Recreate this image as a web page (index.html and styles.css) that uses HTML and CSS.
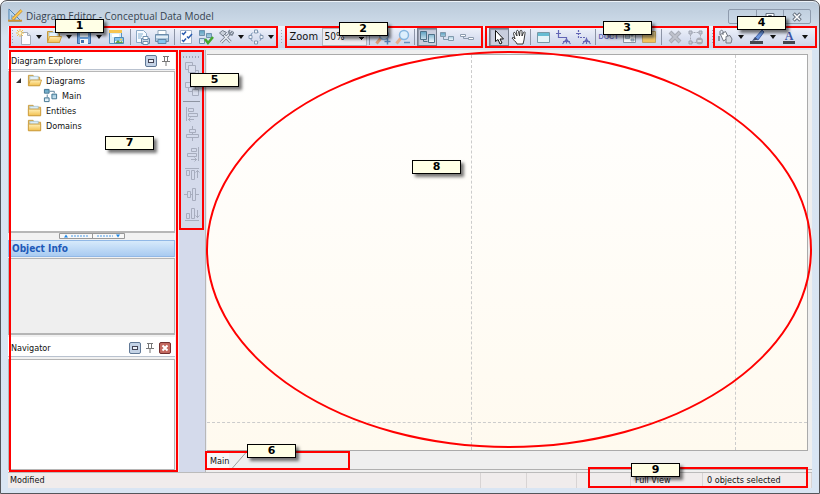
FILE: index.html
```html
<!DOCTYPE html>
<html lang="en">
<head>
<meta charset="utf-8">
<title>Diagram Editor - Conceptual Data Model</title>
<link rel="stylesheet" href="styles.css">
</head>
<body>
<svg class="sprite" aria-hidden="true">
  <linearGradient id="gold" x2="0" y2="1"><stop stop-color="#fff0b8"/><stop offset="1" stop-color="#f2c04f"/></linearGradient>
  <linearGradient id="sky" x2="0" y2="1"><stop stop-color="#5b9fc0"/><stop offset="1" stop-color="#f4fbff"/></linearGradient>
  <symbol id="folder" viewBox="0 0 16 16"><path d="M1.5 13.500v-11h5l1 2h7v9z" fill="#f6d27b" stroke="#c79a3d"/><path d="M3 3.500h9v3H3z" fill="#d8edfb" stroke="#8db5cf" stroke-width=".6"/><path d="M1.500 6.500h13v7h-13z" fill="url(#gold)" stroke="#cfa144"/></symbol>
  <symbol id="folder-open" viewBox="0 0 16 16"><path d="M1.500 13.500v-11h5l1 2h6v9z" fill="#f6d27b" stroke="#c79a3d"/><path d="M3 3.500h9v4H3z" fill="#e3f2fc" stroke="#8db5cf" stroke-width=".6"/><path d="M3.500 7.500h12l-2 6h-12z" fill="url(#gold)" stroke="#cfa144"/></symbol>
  <symbol id="new" viewBox="0 0 16 16"><path d="M5.500 3.500h6l3 3v9h-9z" fill="#fdfdff" stroke="#a4acb8"/><path d="M11.500 3.500v3h3" fill="#dfe6ee" stroke="#a4acb8"/><path d="M4 0v8M0 4h8M1 1l6 6M7 1L1 7" stroke="#efc04c"/><circle cx="4" cy="4" r="1.500" fill="#fff6cf"/></symbol>
  <symbol id="save" viewBox="0 0 16 16"><path d="M1.500 1.500h13v13h-13z" fill="#6a9ed6" stroke="#3a6ca8"/><path d="M4 2h8v6H4z" fill="#e9f3fb"/><path d="M4 10h8v5H4z" fill="#f4f7fa"/><path d="M5 11h3v3H5z" fill="#3f71ad"/></symbol>
  <symbol id="save-image" viewBox="0 0 16 16"><path d="M1.500 1.500h12v13h-12z" fill="#d9ecf8" stroke="#5793c2"/><path d="M1 1h13v3H1z" fill="#f6c451"/><path d="M4 5h7v3H4z" fill="#fff"/><path d="M6.500 8.500h9v6h-9z" fill="#fff" stroke="#4e8ab5"/><path d="M7 9h8v3H7z" fill="#82c3ed"/><path d="M7 14l3-3 2 2 2-1 1 2z" fill="#5c9e48"/><circle cx="13" cy="10.500" r="1" fill="#ffd24b"/></symbol>
  <symbol id="preview" viewBox="0 0 16 16"><path d="M2.500 1.500h7l3 3v9h-10z" fill="#f7fbff" stroke="#8ba9c6"/><path d="M4 5h5M4 7h4M4 9h3" stroke="#82aed0"/><path d="M7.500 9.500h8v5h-8z" fill="#c7d6e5" stroke="#6687a7"/><path d="M9 7.500h5v3H9zM9 12.500h5v3H9z" fill="#fff" stroke="#7091af"/></symbol>
  <symbol id="print" viewBox="0 0 16 16"><path d="M4 1.500h8v5H4z" fill="#fff" stroke="#8fa5b9"/><path d="M1.500 5.500h13v7h-13z" fill="#aac3d9" stroke="#6c8cab"/><path d="M2 7h12v2H2z" fill="#e2edf6"/><path d="M4 10.500h8v4H4z" fill="#83c6ef" stroke="#6086a8"/></symbol>
  <symbol id="checks" viewBox="0 0 16 16"><path d="M2.500 1.500h11v13h-11z" fill="#fff" stroke="#9fb1c8"/><path d="M4 4l1.500 1.500L8 2.500M4 11l1.500 1.500L8 9.500M9 7.500l1.500 1.500L14 5" fill="none" stroke="#285aaf" stroke-width="1.500"/></symbol>
  <symbol id="verify" viewBox="0 0 16 16"><path d="M1.500 1.500h5v5h-5zM8.500 4.500h5v4h-5zM1.500 9.500h5v5h-5z" fill="url(#sky)" stroke="#6e91ad"/><path d="M7 10l3 4 5-6" fill="none" stroke="#43a62f" stroke-width="2.500"/></symbol>
  <symbol id="tools" viewBox="0 0 16 16"><path d="M3 13.500L11.500 5M5 5l7.500 8" stroke="#747d8b" stroke-width="3"/><path d="M3 13.500L11.500 5M5 5l7.500 8" stroke="#e9edf4" stroke-width="1.500"/><path d="M1.500 4l3-2.500 4 2-3.500 3.500z" fill="#c9d0da" stroke="#747d8b"/><path d="M14.500 2L12 4.500 10.500 3 12 1M11 5l3 1 2-3" fill="none" stroke="#7d8796" stroke-width="1.500"/></symbol>
  <symbol id="cycle" viewBox="0 0 16 16"><circle cx="8" cy="8" r="5.500" fill="none" stroke="#6c89ad" stroke-dasharray="4 2"/><path d="M6.500 1h3v3h-3zM12 6.500h3v3h-3zM6.500 12h3v3h-3zM1 6.500h3v3H1z" fill="#f4f8fc" stroke="#8398b2"/></symbol>
  <symbol id="zoom-in" viewBox="0 0 16 16"><path d="M1.500 14.500L6 9" stroke="#d99b76" stroke-width="3"/><circle cx="9" cy="6" r="4.500" fill="#dceffd" stroke="#7fa9d2" stroke-width="1.500"/><path d="M9.500 12.500h6M12.500 9.500v6" stroke="#557fb2" stroke-width="1.500"/></symbol>
  <symbol id="zoom-out" viewBox="0 0 16 16"><path d="M1.500 14.500L6 9" stroke="#e5ae8b" stroke-width="3"/><circle cx="9" cy="6" r="4.500" fill="#dceffd" stroke="#86b6df" stroke-width="1.500"/><path d="M9 13.500h6" stroke="#668fbd" stroke-width="1.500"/></symbol>
  <symbol id="view-large" viewBox="0 0 16 16"><path d="M1.500 2.500h6v8h-6zM9.500 5.500h6v8h-6z" fill="url(#sky)" stroke="#4e7188"/><path d="M4.500 11v1.500h4" fill="none" stroke="#4e7188"/></symbol>
  <symbol id="view-mid" viewBox="0 0 16 16"><path d="M1.500 3.500h5v4h-5zM9.500 7.500h5v4h-5z" fill="url(#sky)" stroke="#8199ac"/><path d="M4.500 8v2.500H9" fill="none" stroke="#8199ac"/></symbol>
  <symbol id="view-small" viewBox="0 0 16 16"><path d="M1.500 5.500h5v2h-5zM9.500 8.500h5v2h-5z" fill="#fff" stroke="#8d9caf"/><path d="M4.500 8v1.500H9" fill="none" stroke="#8d9caf"/></symbol>
  <symbol id="pointer" viewBox="0 0 16 16"><path d="M4.500 1.500v11l2.500-2 2 4.500 2-1-2-4h3.500z" fill="#fff" stroke="#111"/></symbol>
  <symbol id="hand" viewBox="0 0 16 16"><path d="M6 15c-1-3-4-4-5-6 1-1 2-.5 3 1L2.500 4.500c0-1.500 1.500-1.500 2 0L6 7 5.500 2.500c0-1.500 1.700-1.500 2 0L8.500 7 9 2c.5-1 2-1 2 .5L11 7l1.500-3.500c.8-1.200 2-.5 1.500 1L13 11l-1 4z" fill="#fff" stroke="#252525" stroke-width=".9"/></symbol>
  <symbol id="entity" viewBox="0 0 16 16"><path d="M2.500 3.500h12v10h-12z" fill="#e5f4f8" stroke="#7898a6"/><path d="M3 4h11v3H3z" fill="#66bdd3"/></symbol>
  <symbol id="relation" viewBox="0 0 16 16"><path d="M1 4.500h5M3.500 1v7.500h8v6M11.500 10l-4 5M11.500 10l4 5M8 12.500h7" fill="none" stroke="#6265b5" stroke-width="1.200"/></symbol>
  <symbol id="relation-dash" viewBox="0 0 16 16"><path d="M1 4.500h5M3.500 1v7.500h8" fill="none" stroke="#6265b5" stroke-width="1.200" stroke-dasharray="2 1"/><path d="M11.500 9v6M11.500 10l-4 5M11.500 10l4 5M8 12.500h7" fill="none" stroke="#6265b5" stroke-width="1.200"/></symbol>
  <symbol id="picture" viewBox="0 0 16 16"><path d="M2.500 2.500h12v11h-12z" fill="#f7fafc" stroke="#8795a4"/><path d="M4.500 5.500h4v4h-4zM10 10h3v2h-3zM10 5h2v2h-2z" fill="#b4c6d7" stroke="#768ca1" stroke-width=".7"/></symbol>
  <symbol id="note" viewBox="0 0 16 16"><path d="M1.500 2.500h13v11h-13z" fill="url(#gold)" stroke="#c3a664"/></symbol>
  <symbol id="delete" viewBox="0 0 16 16"><path d="M3 3l10 10M13 3L3 13" stroke="#a6aab5" stroke-width="4"/><path d="M3.500 3.500l9 9M12.500 3.500l-9 9" stroke="#bfc2cc" stroke-width="2"/></symbol>
  <symbol id="unselect" viewBox="0 0 16 16"><path d="M3.500 3.500h10v10h-10z" fill="none" stroke="#a4a8b5" stroke-dasharray="2 1"/><path d="M2 2h3v3H2zM12 2h3v3h-3zM2 12h3v3H2z" fill="#c6cad5" stroke="#9da2b0"/><circle cx="12.500" cy="12" r="3.500" fill="#a9acb7"/><path d="M10.500 12h4" stroke="#fff" stroke-width="1.200"/></symbol>
  <symbol id="fill" viewBox="0 0 16 16"><path d="M3.500 5.500l5-3 3 6-5 3.500z" fill="#fff" stroke="#6e747e"/><path d="M3 6V2.500c1-2 3-1 3 0V6" fill="none" stroke="#6e747e"/><path d="M9 7.500l4-1 2 3.500-1 4H9z" fill="#d7dbe2" stroke="#757b86"/><path d="M2 7v5" stroke="#8b929e" stroke-width="2"/></symbol>
  <symbol id="pen" viewBox="0 0 16 16"><path d="M1 12h13v3H1z" fill="#42464e"/><path d="M13 1l2 2-6 8-3-2z" fill="#6d98df" stroke="#294b9a" stroke-width=".8"/><path d="M6 8l3 2.500L3 12z" fill="#3c4d72"/></symbol>
  <symbol id="font-bar" viewBox="0 0 16 16"><path d="M2 12h12v3H2z" fill="#42464e"/></symbol>
  <symbol id="diagram" viewBox="0 0 16 16"><path d="M1.500 1.500h5v4h-5zM9.500 6.500h5v5h-5zM1.500 10.500h5v4h-5z" fill="url(#sky)" stroke="#3e718e"/><path d="M7 3.500h5v2M4.500 7v3" fill="none" stroke="#567c96"/></symbol>
  <symbol id="app" viewBox="0 0 16 16"><path d="M1 1l13 13H1z" fill="#b9d5ee" stroke="#477eae"/><path d="M4 8l4 4H4z" fill="#fff" stroke="#477eae" stroke-width=".7"/><path d="M14.500 2.500L5 12" stroke="#b57727" stroke-width="3"/><path d="M14.500 2.500L5 12" stroke="#ffd053" stroke-width="1.800"/><path d="M0 13.500h15" stroke="#cf9430" stroke-width="2"/></symbol>
  <symbol id="pin" viewBox="0 0 10 12"><path d="M2 1.500h6M3.500 1.500v5M6.500 1.500v5M1 6.500h8M5 7v4" fill="none" stroke="#777"/></symbol>
  <symbol id="front" viewBox="0 0 16 16"><path d="M1.500 1.500h7v7h-7zM8.500 9.500h6v5h-6z"/><path d="M4.500 4.500h7v7h-7z" fill="#d9deed"/></symbol>
  <symbol id="back" viewBox="0 0 16 16"><path d="M4.500 3.500h7v7h-7z"/><path d="M1.500 1.500h6v5h-6zM8.500 8.500h6v6h-6z" fill="#d9deed"/></symbol>
  <symbol id="align-left" viewBox="0 0 16 16"><path d="M2.500 1v14M4.500 2.500h5v3h-5zM4.500 7.500h9v3h-9zM4 13.500h6M6.500 11.500l-2 2 2 2"/></symbol>
  <symbol id="align-center" viewBox="0 0 16 16"><path d="M8.500 0v3M8.500 6v2M8.500 12v3M5.500 3.500h6v3h-6zM2.500 8.500h12v3h-12z"/></symbol>
  <symbol id="align-right" viewBox="0 0 16 16"><path d="M14.500 1v14M7.500 2.500h5v3h-5zM3.500 7.500h9v3h-9zM7 13.500h6M10.500 11.500l2 2-2 2"/></symbol>
  <symbol id="align-top" viewBox="0 0 16 16"><path d="M1 2.500h14M2.500 4.500h3v5h-3zM7.500 4.500h3v9h-3zM13.500 4v8M11.500 6.500l2-2 2 2"/></symbol>
  <symbol id="align-middle" viewBox="0 0 16 16"><path d="M0 8.500h3M6 8.500h2M12 8.500h3M3.500 5.500h3v6h-3zM8.500 2.500h3v12h-3z"/></symbol>
  <symbol id="align-bottom" viewBox="0 0 16 16"><path d="M1 14.500h14M2.500 7.500h3v5h-3zM7.500 2.500h3v10h-3zM13.500 4v8M11.500 9.500l2 2 2-2"/></symbol>
</svg>

<main class="window">
  <header class="titlebar">
    <svg class="icon"><use href="#app"/></svg>
    <h1>Diagram Editor - Conceptual Data Model</h1>
    <div class="window-buttons">
      <button aria-label="Minimize"><svg viewBox="0 0 14 10"><path d="M3 5.500h8v2H3z" fill="#fff" stroke="#66717f"/></svg></button>
      <button aria-label="Maximize"><svg viewBox="0 0 14 10"><path d="M3 1.500h8v7H3zM5.500 3.500h3v3h-3z" fill="#fff" stroke="#66717f"/></svg></button>
      <button aria-label="Close"><svg viewBox="0 0 14 10"><path d="M3.500 1.500l7 7M10.500 1.500l-7 7" stroke="#66717f" stroke-width="3.500"/><path d="M4 2l6 6M10 2L4 8" stroke="#fff" stroke-width="1.500"/></svg></button>
    </div>
  </header>

  <nav class="toolbar" aria-label="Tools">
    <div class="group standard">
      <i class="grip"></i>
      <button aria-label="New"><svg class="icon"><use href="#new"/></svg></button><button class="drop" aria-label="New options"></button>
      <button aria-label="Open"><svg class="icon"><use href="#folder-open"/></svg></button><button class="drop" aria-label="Open options"></button>
      <button aria-label="Save"><svg class="icon"><use href="#save"/></svg></button><button class="drop" aria-label="Save options"></button>
      <button class="wide" aria-label="Save as image"><svg class="icon"><use href="#save-image"/></svg></button>
      <i class="sep narrow"></i>
      <button aria-label="Print preview"><svg class="icon"><use href="#preview"/></svg></button>
      <button aria-label="Print"><svg class="icon"><use href="#print"/></svg></button>
      <i class="sep narrow"></i>
      <button aria-label="Options"><svg class="icon"><use href="#checks"/></svg></button>
      <button aria-label="Verify"><svg class="icon"><use href="#verify"/></svg></button>
      <button aria-label="Tools"><svg class="icon"><use href="#tools"/></svg></button><button class="drop" aria-label="Tool options"></button>
      <button aria-label="Layout"><svg class="icon"><use href="#cycle"/></svg></button><button class="drop" aria-label="Layout options"></button>
      <b class="callout">1</b>
    </div>
    <i class="grip between"></i>
    <div class="group zoom">
      <label for="zoom">Zoom</label>
      <select id="zoom"><option>50%</option><option>100%</option></select>
      <i class="sep"></i>
      <button aria-label="Zoom in"><svg class="icon"><use href="#zoom-in"/></svg></button>
      <button aria-label="Zoom out"><svg class="icon"><use href="#zoom-out"/></svg></button>
      <i class="sep narrow"></i>
      <button class="pressed" aria-label="Full view"><svg class="icon"><use href="#view-large"/></svg></button>
      <button aria-label="Medium view"><svg class="icon"><use href="#view-mid"/></svg></button>
      <button aria-label="Small view"><svg class="icon"><use href="#view-small"/></svg></button>
      <b class="callout">2</b>
    </div>
    <div class="group draw">
      <button class="pressed" aria-label="Pointer"><svg class="icon"><use href="#pointer"/></svg></button>
      <button aria-label="Hand"><svg class="icon"><use href="#hand"/></svg></button>
      <i class="sep narrow"></i>
      <button aria-label="Entity"><svg class="icon"><use href="#entity"/></svg></button>
      <button aria-label="Identifying relationship"><svg class="icon"><use href="#relation"/></svg></button>
      <button aria-label="Relationship"><svg class="icon"><use href="#relation-dash"/></svg></button>
      <i class="sep"></i>
      <button class="doct">DOCT</button>
      <button aria-label="Picture"><svg class="icon"><use href="#picture"/></svg></button>
      <button aria-label="Note"><svg class="icon"><use href="#note"/></svg></button>
      <i class="sep"></i>
      <button aria-label="Delete"><svg class="icon"><use href="#delete"/></svg></button>
      <button aria-label="Remove from diagram"><svg class="icon"><use href="#unselect"/></svg></button>
      <b class="callout">3</b>
    </div>
    <i class="grip between"></i>
    <div class="group colors">
      <button aria-label="Fill color"><svg class="icon"><use href="#fill"/></svg></button><button class="drop" aria-label="Fill options"></button>
      <button aria-label="Line color"><svg class="icon"><use href="#pen"/></svg></button><button class="drop" aria-label="Line options"></button>
      <button class="font-color"><svg class="icon"><use href="#font-bar"/></svg><span>A</span></button><button class="drop" aria-label="Font options"></button>
      <b class="callout">4</b>
    </div>
  </nav>

  <div class="workspace">
    <aside class="sidebar">
      <header class="panel-head"><h2>Diagram Explorer</h2><button class="restore" aria-label="Restore"></button><button aria-label="Pin"><svg class="pin"><use href="#pin"/></svg></button></header>
      <ul class="tree">
        <li><i class="expander"></i><svg class="icon"><use href="#folder-open"/></svg>Diagrams</li>
        <li class="child"><svg class="icon"><use href="#diagram"/></svg>Main</li>
        <li><i></i><svg class="icon"><use href="#folder"/></svg>Entities</li>
        <li><i></i><svg class="icon"><use href="#folder"/></svg>Domains</li>
      </ul>
      <div class="splitter"><svg viewBox="0 0 66 6"><path d="M.5.500h65v5H.5zM33.500 0v6" fill="#f8f8f8" stroke="#999"/><path d="M5 4.500h4l-2-3zM57 1.500h4l-2 3z" fill="#1b86e8"/><path d="M12 3h17M38 3h16" stroke="#4a9be8" stroke-dasharray="2 1"/></svg></div>
      <h2 class="info-head">Object Info</h2>
      <div class="info-body"></div>
      <header class="panel-head navigator"><h2>Navigator</h2><button class="restore" aria-label="Restore"></button><button aria-label="Pin"><svg class="pin"><use href="#pin"/></svg></button><button class="close" aria-label="Close"><svg viewBox="0 0 10 10"><path d="M2.500 2.500l5 5M7.500 2.500l-5 5" stroke="#fff" stroke-width="2"/></svg></button></header>
      <div class="navigator-body"></div>
      <b class="callout">7</b>
    </aside>

    <div class="align-column">
      <div class="align-bar">
        <i class="dots"></i>
        <button aria-label="Bring to front"><svg class="icon"><use href="#front"/></svg></button>
        <button aria-label="Send to back"><svg class="icon"><use href="#back"/></svg></button>
        <i class="rule"></i>
        <button aria-label="Align left"><svg class="icon"><use href="#align-left"/></svg></button>
        <button aria-label="Align center"><svg class="icon"><use href="#align-center"/></svg></button>
        <button aria-label="Align right"><svg class="icon"><use href="#align-right"/></svg></button>
        <button aria-label="Align top"><svg class="icon"><use href="#align-top"/></svg></button>
        <button aria-label="Align middle"><svg class="icon"><use href="#align-middle"/></svg></button>
        <button aria-label="Align bottom"><svg class="icon"><use href="#align-bottom"/></svg></button>
        <b class="callout">5</b>
      </div>
    </div>

    <section class="editor">
      <div class="canvas">
        <i class="page-line first"></i><i class="page-line second"></i><i class="page-line bottom"></i>
      </div>
      <div class="tabs">
        <div class="tab-area">
          <button class="tab">Main</button><svg class="slant" viewBox="0 0 14 16"><path d="M0 16L14 0" stroke="#999"/></svg>
          <b class="callout">6</b>
        </div>
      </div>
      <i class="ellipse"></i>
      <b class="callout">8</b>
    </section>
  </div>

  <footer class="status">
    <span class="state">Modified</span><span class="cell"></span><span class="cell"></span><span class="cell"></span><span class="view">Full View</span><span class="selected">0 objects selected</span>
    <div class="status-mark"><b class="callout">9</b></div>
  </footer>
</main>
</body>
</html>
```
FILE: styles.css
```css
* { box-sizing: border-box; }

body {
  margin: 0;
  background: #fff;
  color: #111;
  font: 9px/14px "DejaVu Sans Condensed", "DejaVu Sans", sans-serif;
}

h1, h2, ul { margin: 0; padding: 0; font-size: inherit; font-weight: normal; }
button { margin: 0; padding: 0; border: 0; background: none; color: inherit; font: inherit; }
i { font-style: normal; }
.sprite { position: absolute; width: 0; height: 0; }
.icon { display: block; flex: none; width: 16px; height: 16px; }

.window {
  display: flex;
  flex-direction: column;
  min-height: 100vh;
  padding: 0 7px 5px;
  border: 1px solid #55565b;
  border-radius: 7px 7px 0 0;
  background: linear-gradient(#b9c9d9, #d8e4f1 36px, #d9e5f3);
  box-shadow: inset 0 1px #edf3f9;
}

.titlebar { display: flex; align-items: center; height: 25px; }
.titlebar h1 { flex: 1; padding: 4px 0 0 3px; color: #364350; font: 10px/14px "Open Sans", sans-serif; }
.titlebar .icon { margin-top: 4px; width: 15px; height: 15px; }
.window-buttons { display: flex; align-self: flex-start; margin: 8px 1px 0 0; border: 1px solid #8e9bad; border-radius: 2px; }
.window-buttons button { width: 27px; height: 13px; }
.window-buttons button + button { border-left: 1px solid #8e9bad; }
.window-buttons svg { display: block; width: 14px; height: 10px; margin: auto; }

.toolbar {
  display: flex;
  height: 22px;
  margin-right: -5px;
  padding-left: 1px;
  background: linear-gradient(#f1f4fb, #dce2f2 50%, #cbd3e8);
}
.group { position: relative; display: flex; align-items: center; border: 2px solid #f00; }
.group button { display: flex; flex: none; align-items: center; justify-content: center; width: 20px; height: 18px; }
.group .drop { width: 10px; }
.group .wide { width: 24px; }
.drop::after { content: ""; border: 3px solid transparent; border-top: 4px solid #111; border-bottom: 0; }
.group .pressed { border: 1px solid #767d8c; background: #c9cede; box-shadow: inset 1px 1px 1px #8d94a4; }
.grip { width: 3px; height: 16px; background: radial-gradient(circle, #9da5b6 1px, transparent 1px) 0 0 / 3px 3px; }
.grip.between { margin: 3px 0 0 2px; }
.sep { width: 6px; height: 16px; background: linear-gradient(#8c94a6, #8c94a6) center / 1px 100% no-repeat; }
.sep.narrow { width: 4px; }
.zoom { margin: 0 2px; padding-right: 4px; }
.zoom label { width: 35px; padding-left: 3px; font-size: 11px; }
.zoom select {
  appearance: none;
  width: 45px;
  height: 18px;
  margin: 0;
  padding: 0 2px;
  border: 1px solid #b0b5be;
  border-radius: 0;
  background: conic-gradient(from -45deg at 50% 100%, #111 90deg, transparent 0) 36px 7px / 6px 3px no-repeat, #ececf1;
  background: linear-gradient(#111, #111) 36px 8px / 5px 1px no-repeat, linear-gradient(#111, #111) 37px 9px / 3px 1px no-repeat, linear-gradient(#111, #111) 38px 10px / 1px 1px no-repeat, #ececf1;
  color: #111;
  font: 10px/16px "DejaVu Sans Condensed", sans-serif;
}
.draw { padding: 0 2px; }
.group .doct { color: #6265b5; font: bold 7px/8px "Liberation Sans", sans-serif; }
.colors { margin: 0 0 0 auto; padding-right: 4px; }
.colors .drop { width: 12px; }
.font-color { position: relative; }
.font-color span { position: absolute; bottom: 4px; color: #3a53a6; font: bold 12px/12px "Liberation Serif", serif; }

.callout {
  position: absolute;
  z-index: 5;
  width: 49px;
  height: 14px;
  border: 1px solid #000;
  background: #ffffe6;
  box-shadow: 3px 3px 3px #0008;
  color: #000;
  font: bold 11px/12px "DejaVu Sans", sans-serif;
  text-align: center;
}
.standard .callout { left: 44px; top: -9px; }
.zoom .callout { left: 52px; top: -6px; }
.draw .callout { left: 116px; top: -7px; }
.colors .callout { left: 22px; top: -12px; }
.sidebar .callout { left: 97px; top: 86px; }
.align-bar .callout { left: 9px; top: 21px; }
.tab-area .callout { left: 40px; top: -9px; }
.editor > .callout { left: 34%; top: 110px; }
.status-mark .callout { left: 41px; top: -6px; }

.workspace { display: flex; flex: 1; margin-top: 2px; background: #efefef; }

.sidebar { position: relative; display: flex; flex: none; flex-direction: column; width: 171px; padding: 0 4px 2px 0; background: #f1f1f1; }
.sidebar::after { content: ""; position: absolute; inset: 0 1px 0 1px; border: 2px solid #f00; pointer-events: none; }
.panel-head { display: flex; align-items: center; gap: 4px; height: 20px; padding: 2px 4px 0 3px; border-bottom: 1px solid #b9c2cf; background: #fff; }
.panel-head h2 { flex: 1; }
.pin { display: block; width: 10px; height: 12px; }
.restore { width: 12px; height: 12px; border: 1px solid #607896; border-radius: 2px; background: linear-gradient(#445, #445) center / 6px 4px no-repeat, #c4d3e6; }
.restore::after { content: ""; display: block; width: 4px; height: 2px; margin: auto; background: #eef3fa; }
.panel-head .restore { border-width: 1px; }
.panel-head .close { width: 12px; height: 12px; border: 1px solid #732f2f; border-radius: 2px; background: #c3685f; }
.close svg { display: block; width: 10px; height: 10px; }
.tree { flex: 1; margin-top: 1px; padding: 1px 0 0 7px; border: 1px solid #b7b7b7; border-width: 1px 1px 2px; background: #fff; list-style: none; }
.tree li { display: flex; align-items: center; height: 15px; gap: 4px; }
.tree .icon { width: 15px; height: 15px; }
.tree i { width: 7px; }
.tree .expander { width: 5px; height: 5px; margin-right: 2px; border: solid transparent; border-width: 0 0 5px 5px; border-bottom-color: #333; }
.tree .child { padding-left: 27px; }
.splitter { height: 7px; background: #f2f2f2; }
.splitter svg { display: block; width: 66px; height: 6px; margin: 0 auto; }
.info-head { height: 17px; padding-left: 3px; border: 1px solid #91b8e6; background: linear-gradient(#d7eafb, #a9cbf1); color: #1e5ab8; font-size: 10px; font-weight: bold; line-height: 15px; }
.info-body { height: 77px; margin-top: 1px; border: 1px solid #b5b5b5; border-bottom-width: 2px; background: #efefef; }
.navigator { margin-top: 2px; }
.navigator-body { height: 111px; margin-top: 2px; border: 1px solid #b5b5b5; background: #fff; }

.align-column { flex: none; width: 26px; padding-right: 1px; background: #d4daeb; }
.align-bar { position: relative; display: flex; flex-direction: column; align-items: center; height: 180px; padding-top: 3px; border: 2px solid #f00; }
.align-bar button { display: flex; flex: none; align-items: center; width: 16px; height: 20px; }
.align-bar svg { fill: none; stroke: #a7adbe; }
.dots { width: 19px; height: 4px; background: radial-gradient(circle, #9da5b6 1px, transparent 1px) 0 0 / 3px 4px; }
.rule { width: 17px; height: 5px; background: linear-gradient(#8e94a2, #8e94a2) center / 100% 1px no-repeat; flex: none; }

.editor { position: relative; display: flex; flex: 1; flex-direction: column; min-width: 0; padding: 2px 0 2px 1px; border-left: 1px solid #b8b8b8; }
.canvas { position: relative; flex: 1; margin: 2px 4px 0 0; border: 1px solid #aaa; border-left: 0; background: linear-gradient(#fff, #fffaef); }
.page-line { position: absolute; }
.first, .second { top: 0; bottom: 0; border-left: 1px dashed #ccc; }
.first { left: 44%; }
.second { left: 88%; }
.bottom { right: 0; bottom: 27px; left: 0; border-top: 1px dashed #ccc; }
.ellipse { position: absolute; inset: 1px 0 24px 0; border: 2px solid #f00; border-radius: 50%; pointer-events: none; }
.tabs { height: 19px; border-bottom: 1px solid #b0b0b0; background: #efefef; }
.tab-area { position: relative; display: flex; width: 24%; height: 19px; margin-left: -2px; border: 2px solid #f00; }
.tab { padding: 0 0 0 3px; background: #f8f8f8; }
.slant { width: 14px; height: 15px; margin-left: 3px; }

.status { position: relative; display: grid; grid-template-columns: minmax(0, 1fr) 46px 50px 54px 72px 109px; height: 16px; border-top: 1px solid #bbb; background: #f0ecec; line-height: 14px; }
.status span { padding-left: 4px; border-right: 1px solid #d8d4d4; white-space: nowrap; }
.status .state { padding-left: 2px; }
.status-mark { position: absolute; right: 4px; bottom: 0; width: 220px; height: 21px; border: 2px solid #f00; }
```
